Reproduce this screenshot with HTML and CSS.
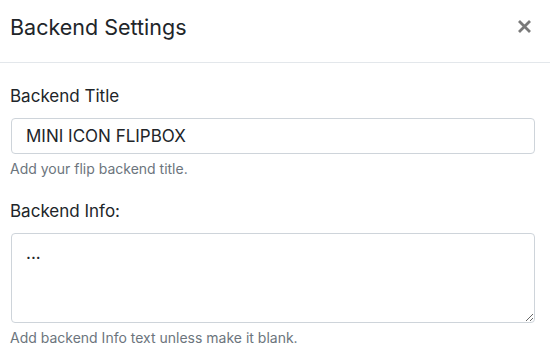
FILE: index.html
```html
<!DOCTYPE html>
<html>
<head>
<meta charset="utf-8">
<link rel="stylesheet" href="styles.css">
</head>
<body>
<div class="modal">
  <div class="modal-header">
    <h5 class="modal-title">Backend Settings</h5>
    <button class="close" type="button" aria-label="Close">
      <svg width="15" height="15" viewBox="0 0 15 15"><path d="M2 2 L13 13 M13 2 L2 13" stroke="#7a7a7a" stroke-width="2.8" stroke-linecap="butt"/></svg>
    </button>
  </div>
  <div class="modal-body">
    <div class="form-group">
      <label class="form-label">Backend Title</label>
      <input class="form-control" type="text" value="MINI ICON FLIPBOX">
      <small class="form-text">Add your flip backend title.</small>
    </div>
    <div class="form-group">
      <label class="form-label">Backend Info:</label>
      <textarea class="form-control textarea">...</textarea>
      <small class="form-text">Add backend Info text unless make it blank.</small>
    </div>
  </div>
</div>
</body>
</html>
```

FILE: styles.css
```css
* { box-sizing: border-box; }
html, body { margin: 0; padding: 0; background: #fff; }
body {
  font-family: Inter, "Noto Sans", sans-serif;
  color: #212529;
  font-size: 17px;
  line-height: 1.5;
}
.modal { width: 550px; }
.modal-header {
  display: flex;
  align-items: center;
  justify-content: space-between;
  height: 63px;
  padding: 0 18px 0 10px;
  border-bottom: 1px solid #e3e7eb;
}
.modal-title {
  margin: 0;
  font-size: 21.5px;
  font-weight: 400;
  line-height: 1.5;
  margin-top: -8px;
}
.close {
  border: 0;
  background: transparent;
  padding: 0;
  margin-top: -9px;
  display: flex;
}
.modal-body {
  padding: 21px 15px 0 10px;
}
.form-group { margin-bottom: 20px; }
.form-label {
  display: block;
  margin-bottom: 10px;
  font-size: 17px;
  line-height: 24px;
}
.form-control {
  display: block;
  width: calc(100% - 1px);
  height: 36px;
  padding: 0 14px;
  margin-left: 1px;
  font-family: inherit;
  font-size: 17px;
  color: #212529;
  border: 1px solid #ced4da;
  border-radius: 4px;
  background: #fff;
  outline: none;
}
.textarea {
  height: 90px;
  padding: 7px 14px;
  line-height: 25.5px;
  resize: vertical;
}
.form-text {
  display: block;
  margin-top: 4px;
  font-size: 14px;
  line-height: 21px;
  color: #6c757d;
}
```
